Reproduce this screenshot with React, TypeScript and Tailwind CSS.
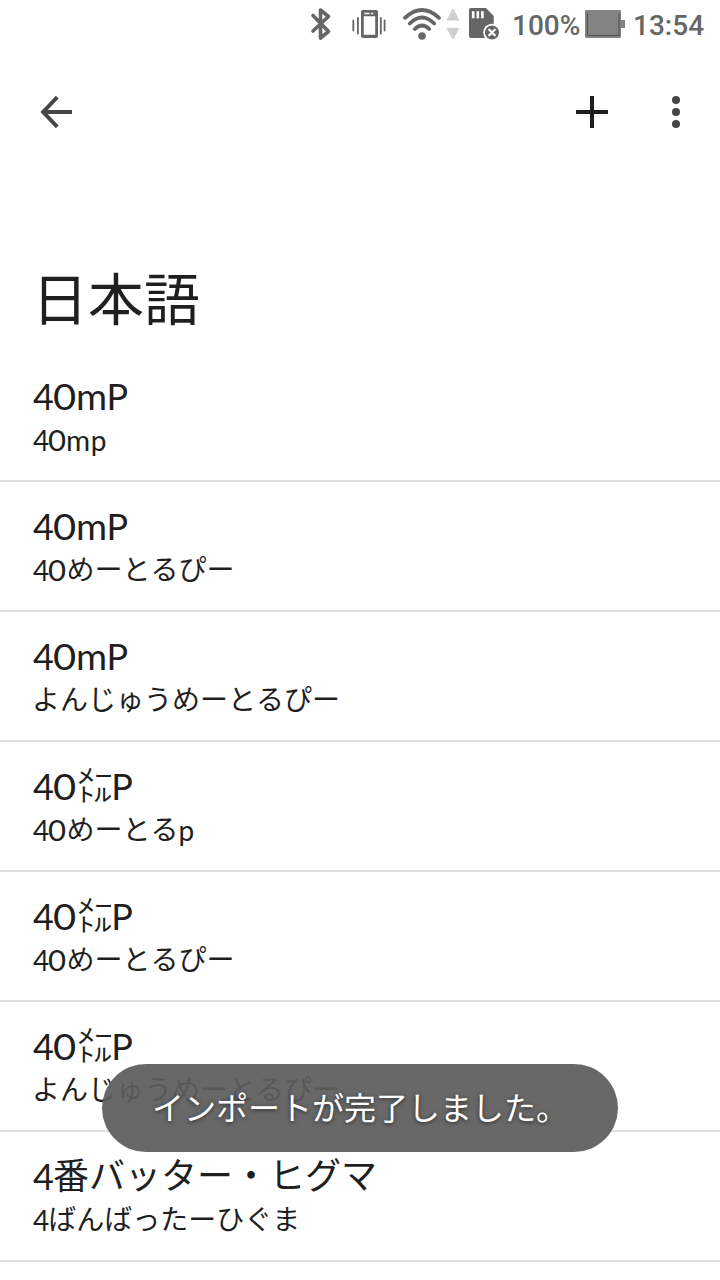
type Entry = { word: string; reading: string };

const entries: Entry[] = [
  { word: "40mP", reading: "40mp" },
  { word: "40mP", reading: "40めーとるぴー" },
  { word: "40mP", reading: "よんじゅうめーとるぴー" },
  { word: "40㍍P", reading: "40めーとるp" },
  { word: "40㍍P", reading: "40めーとるぴー" },
  { word: "40㍍P", reading: "よんじゅうめーとるぴー" },
  { word: "4番バッター・ヒグマ", reading: "4ばんばったーひぐま" },
];

const glyphStyles: Record<string, string> = {
  "4": "relative top-px left-px",
  "0": "relative top-px inline-block w-[0.65em] scale-x-[1.11] text-center",
  m: "relative top-px inline-block w-[0.87em] scale-x-[1.05] text-center",
  P: "relative top-px -left-px",
  p: "relative top-px",
};

const WordText = ({ text }: { text: string }) => (
  <>
    {text.split(/([40mPp])/).map((part, i) =>
      glyphStyles[part] ? (
        <span key={i} className={glyphStyles[part]}>{part}</span>
      ) : (
        part
      )
    )}
  </>
);

const StatusBar = () => (
  <div className="flex h-12 items-center pl-[308px] text-[#666666]">
    <svg className="h-12 w-[26px] shrink-0" viewBox="308 0 26 48" fill="none" stroke="currentColor" strokeWidth="3.6" strokeLinecap="round" strokeLinejoin="round">
      <path d="M313 15.5 L328.5 31.5 L320.5 38 V10 L328.5 16.5 L313 31" />
    </svg>
    <svg className="ml-4 h-12 w-[38px] shrink-0" viewBox="350 0 38 48" fill="none" stroke="currentColor">
      <path fill="currentColor" fillRule="evenodd" stroke="none" d="M363 10h13a2 2 0 0 1 2 2v24a2 2 0 0 1-2 2h-13a2 2 0 0 1-2-2V12a2 2 0 0 1 2-2Zm.8 6.3v18.5h11.4V16.3ZM364.5 12.7v1.6h5v-1.6Zm6.7 0v1.6h2v-1.6Z" />
      <path strokeWidth="1.8" strokeLinecap="round" d="M357.9 18v15.5M353.3 20.5v10M380.8 18v15.5M384.6 20.5v10" />
    </svg>
    <svg className="ml-[13px] h-12 w-[42px] shrink-0" viewBox="401 0 42 48" fill="none" stroke="currentColor" strokeWidth="3.7" strokeLinecap="round">
      <path d="M405 17.8Q422 2.2 439 17.8M409.8 23.5Q422 11.5 434.2 23.5M414.8 29Q422 22 429.2 29" />
      <circle cx="422" cy="36" r="3.8" fill="currentColor" stroke="none" />
    </svg>
    <svg className="ml-[3px] h-12 w-[14px] shrink-0" viewBox="446 0 14 48" fill="#cfcfcf" stroke="#cfcfcf" strokeLinejoin="round">
      <path d="M453 9l5.8 11h-11.6ZM447.2 28.3h11.6L453 39Z" />
    </svg>
    <svg className="ml-2 h-12 w-8 shrink-0" viewBox="468 0 32 48">
      <path fill="currentColor" d="M471 8h15l7.7 8v20a2 2 0 0 1-2 2H471a2 2 0 0 1-2-2V10a2 2 0 0 1 2-2Z" />
      <path stroke="white" strokeWidth="2.6" d="M473.2 11.3v7M477.8 11.3v7M482.4 11.3v7" />
      <circle cx="492" cy="32.5" r="8.8" fill="white" />
      <circle cx="492" cy="32.5" r="7" fill="currentColor" />
      <path stroke="white" strokeWidth="2.2" strokeLinecap="round" d="M489.2 29.7l5.6 5.6M494.8 29.7l-5.6 5.6" />
    </svg>
    <span className="ml-[12px] w-[73px] pt-1 font-[Roboto,sans-serif] text-[28px] leading-none font-medium whitespace-nowrap">100%</span>
    <svg className="h-12 w-10 shrink-0" viewBox="585 0 40 48" fill="none">
      <rect x="585" y="10" width="36" height="28" rx="1" fill="#838383" />
      <path fill="#838383" d="M621 20h4v8h-4z" />
      <path stroke="#4f4f4f" d="M587.5 13v22.5h31.5V13" />
    </svg>
    <span className="ml-2 pt-1 font-[Roboto,sans-serif] text-[28px] leading-none font-medium">13:54</span>
  </div>
);

const AppBar = () => (
  <div className="flex h-32 items-center justify-between pr-6 pl-10 text-[#444746]">
    <svg className="h-8 w-8" viewBox="0 0 32 32" fill="none" stroke="currentColor" strokeWidth="4">
      <path d="M32 16H4M17.2 1.2L3.2 16L17.2 30.8" />
    </svg>
    <div className="flex items-center gap-[48px]">
      <svg className="h-8 w-8" viewBox="0 0 32 32" stroke="#1f1f1f" strokeWidth="4">
        <path d="M0 16h32M16 0v32" />
      </svg>
      <svg className="h-10 w-10" viewBox="0 0 40 40" fill="currentColor">
        <circle cx="20" cy="8" r="4" />
        <circle cx="20" cy="20" r="4" />
        <circle cx="20" cy="32" r="4" />
      </svg>
    </div>
  </div>
);

const EntryRow = ({ word, reading }: Entry) => (
  <li className="h-[130px] border-b-2 border-[#e0e0e0] px-8 pt-[17px]">
    <div className="h-[52px] text-[36px] leading-[52px] whitespace-nowrap">
      <WordText text={word} />
    </div>
    <div className="h-[36px] text-[28px] leading-[36px] whitespace-nowrap">
      <WordText text={reading} />
    </div>
  </li>
);

const App = () => {
  return (
    <div className="relative h-[1280px] w-[720px] overflow-hidden bg-white font-[Lato,'Noto_Sans_CJK_JP',sans-serif] text-[#1f1f1f]">
      <StatusBar />
      <AppBar />
      <h1 className="h-[176px] px-8 pt-[83px] text-[56px] leading-[80px]">日本語</h1>
      <ul>
        {entries.map((entry, i) => (
          <EntryRow key={i} {...entry} />
        ))}
      </ul>

      {/* Toast */}
      <div className="absolute top-[1064px] left-[102px] z-10 flex h-[88px] w-[516px] items-center justify-center rounded-full bg-[#5c5c5c]/93 text-[32px] whitespace-nowrap text-white [text-shadow:0_1px_4px_rgba(0,0,0,0.6)]">
        インポートが完了しました。
      </div>
    </div>
  );
};

export default App;
